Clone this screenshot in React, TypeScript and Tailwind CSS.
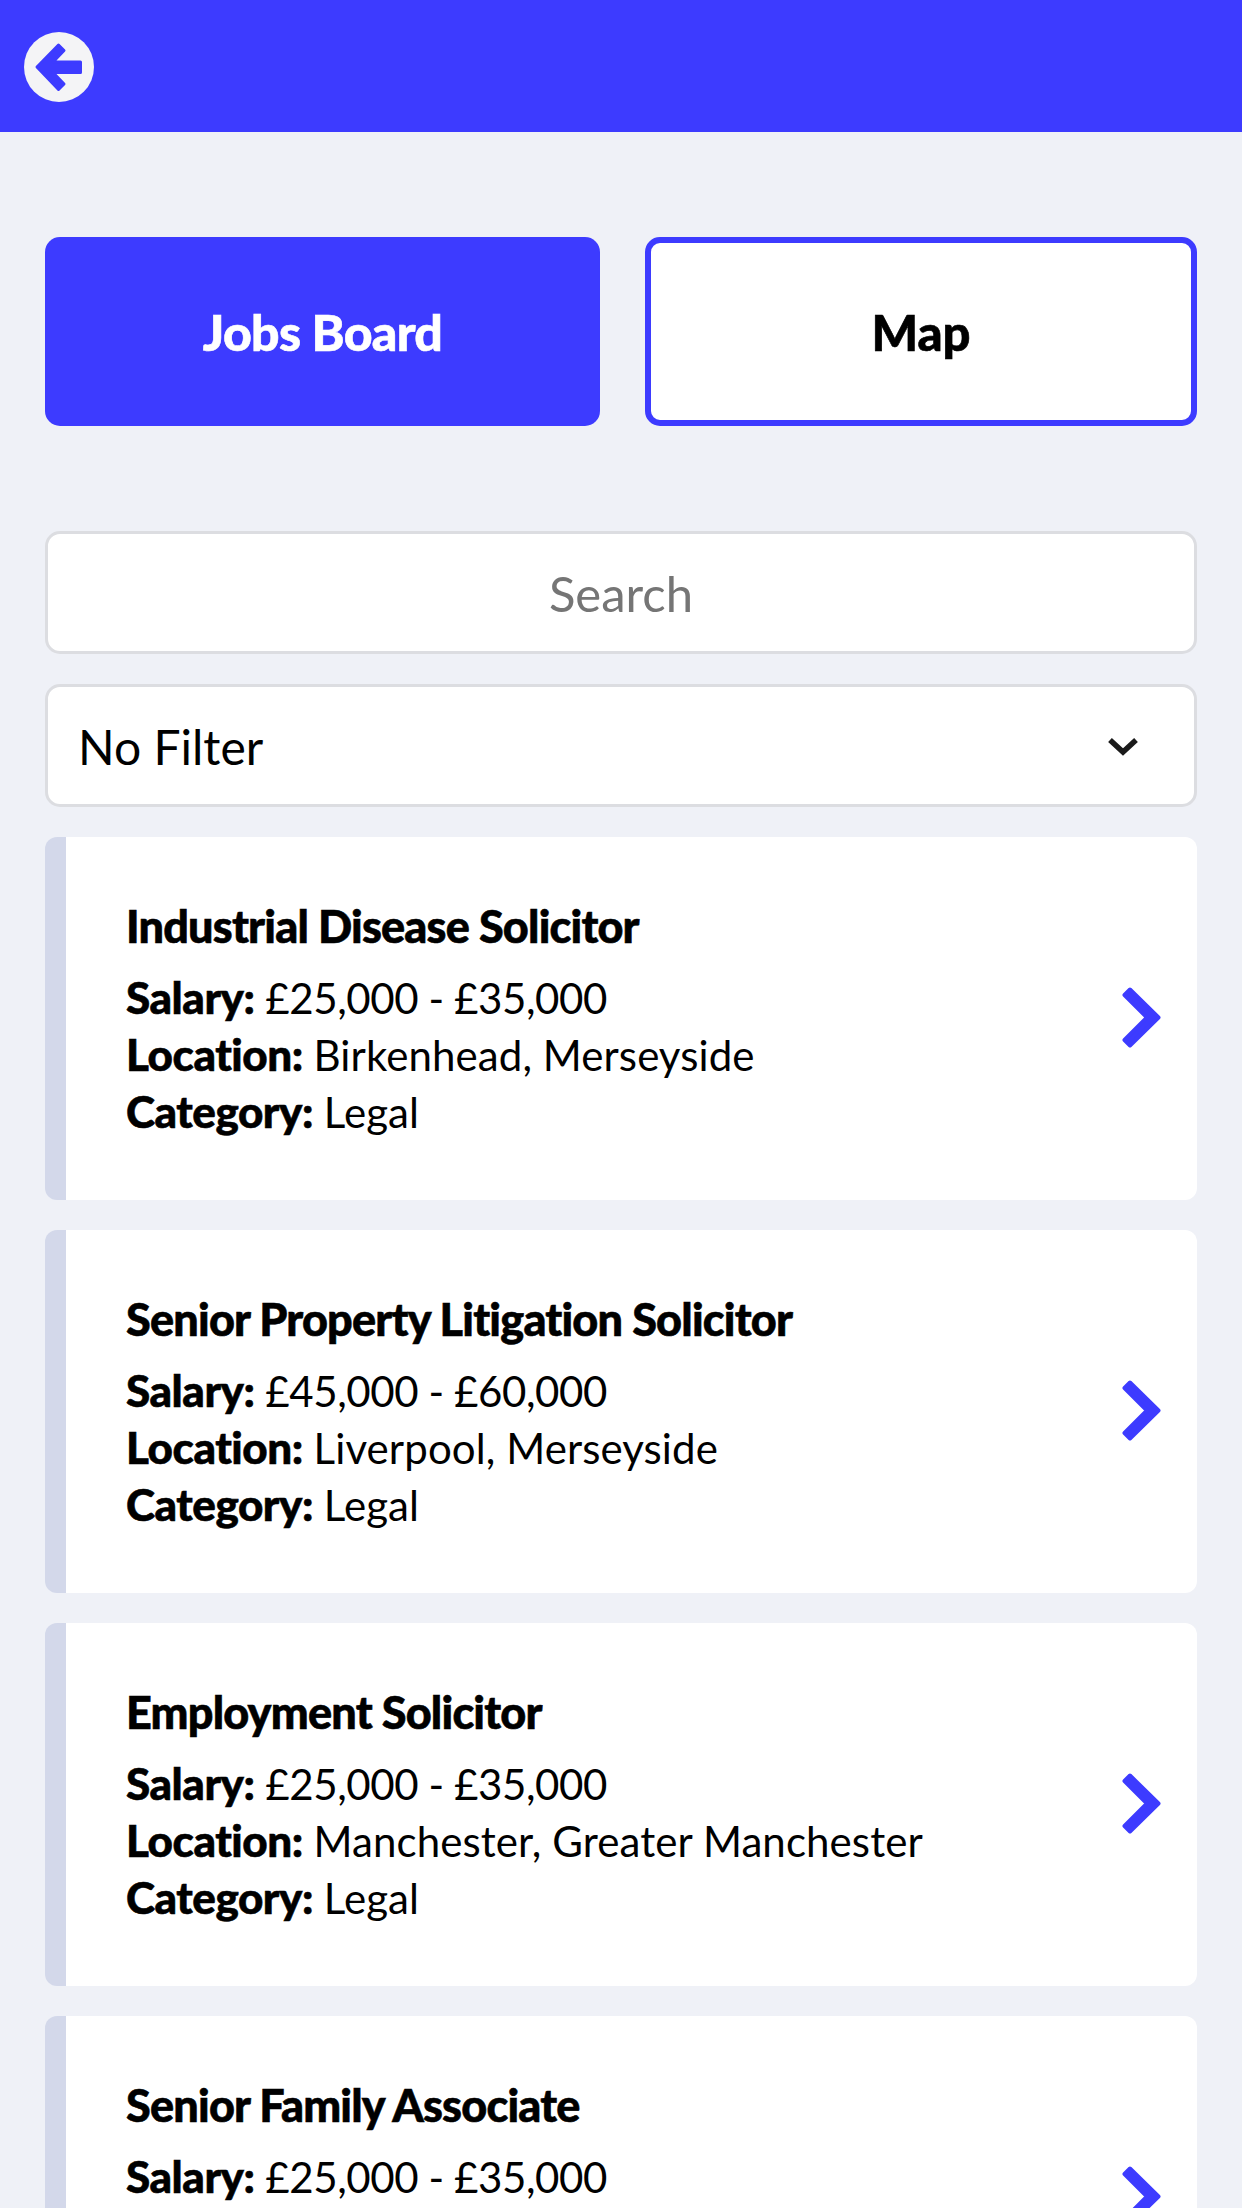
const LATO = "font-['Lato',sans-serif]"

interface Job {
  title: string
  salary: string
  location?: string
  category?: string
}

const JOBS: Job[] = [
  { title: 'Industrial Disease Solicitor', salary: '£25,000 - £35,000', location: 'Birkenhead, Merseyside', category: 'Legal' },
  { title: 'Senior Property Litigation Solicitor', salary: '£45,000 - £60,000', location: 'Liverpool, Merseyside', category: 'Legal' },
  { title: 'Employment Solicitor', salary: '£25,000 - £35,000', location: 'Manchester, Greater Manchester', category: 'Legal' },
  // only the top of this card is on screen
  { title: 'Senior Family Associate', salary: '£25,000 - £35,000' },
]

function BackIcon() {
  return (
    <svg viewBox="0 0 70 70" className="w-[70px] h-[70px]">
      <circle cx="35" cy="35" r="35" fill="#f4f4f6" />
      <path
        d="M13 35 L34.5 13 L40 18.5 L29 30 H56.5 V40.5 H29 L40 52 L34.5 57.5 Z"
        fill="#3d3bff"
        stroke="#3d3bff"
        strokeWidth="3"
        strokeLinejoin="round"
      />
    </svg>
  )
}

function Chevron() {
  return (
    <svg viewBox="0 0 39 61" className="w-[39px] h-[61px] shrink-0 mb-[2px]">
      <path
        d="M8 2.5 L36.5 30.5 L8 58.5 L2.5 53 L25 30.5 L2.5 8 Z"
        fill="#3d3bff"
        stroke="#3d3bff"
        strokeWidth="4"
        strokeLinejoin="round"
      />
    </svg>
  )
}

function JobRow({ label, value, digits }: { label: string; value: string; digits?: boolean }) {
  return (
    <div>
      <span className="text-[44px] leading-none font-[900] tracking-[-0.45px] [-webkit-text-stroke:0.6px_currentColor]">{label}</span>{' '}
      <span className={digits ? 'tracking-[-0.4px]' : 'tracking-[0.1px]'}>{value}</span>
    </div>
  )
}

function JobCard({ job }: { job: Job }) {
  return (
    <div className="flex h-[363px] items-center rounded-[12px] bg-white border-l-[21px] border-[#d3d8ea] pl-[60px] pr-[36px] border-y-0 border-r-0">
      <div className="flex-1 self-start pt-[59px]">
        <div className="text-[45px] leading-[60px] font-[900] tracking-[-0.8px] mb-[14px] [-webkit-text-stroke:0.6px_currentColor]">{job.title}</div>
        <div className="text-[42px] leading-[57px]">
          <JobRow label="Salary:" value={job.salary} digits />
          {job.location && <JobRow label="Location:" value={job.location} />}
          {job.category && <JobRow label="Category:" value={job.category} />}
        </div>
      </div>
      <Chevron />
    </div>
  )
}

export default function App() {
  return (
    <div className={`${LATO} h-[2208px] w-[1242px] overflow-hidden bg-[#eff1f7] text-black`}>
      <div className="flex h-[132px] items-center bg-[#3d3bff] pl-[24px] pt-[2px]">
        <BackIcon />
      </div>

      <div className="px-[45px]">
        <div className="flex gap-[45px] pt-[105px]">
          <div className="flex h-[189px] w-[555px] items-center justify-center rounded-[15px] bg-[#3d3bff] pt-[2px] text-[50px] font-[900] tracking-[-0.7px] text-white [-webkit-text-stroke:0.6px_currentColor]">
            Jobs Board
          </div>
          <div className="flex h-[189px] flex-1 items-center justify-center rounded-[15px] border-[6px] border-[#3d3bff] bg-white pt-[2px] text-[49px] font-[900] [-webkit-text-stroke:0.6px_currentColor]">
            Map
          </div>
        </div>

        <div className="mt-[105px] flex h-[123px] items-center justify-center rounded-[15px] border-[3px] border-[#dcdde1] bg-white pt-[2px] text-[49px] text-[#757575]">
          Search
        </div>
        <div className="mt-[30px] flex h-[123px] items-center justify-between rounded-[15px] border-[3px] border-[#dcdde1] bg-white pl-[30px] pr-[55px] pt-[2px] text-[48px]">
          <span>No Filter</span>
          <svg viewBox="0 0 32 20" className="w-[32px] h-[20px] mt-[1px]">
            <path d="M3 3 L16 15 L29 3" fill="none" stroke="#1a1a1a" strokeWidth="5.5" />
          </svg>
        </div>

        <div className="mt-[30px] flex flex-col gap-[30px]">
          {JOBS.map((job) => (
            <JobCard key={job.title} job={job} />
          ))}
        </div>
      </div>
    </div>
  )
}
